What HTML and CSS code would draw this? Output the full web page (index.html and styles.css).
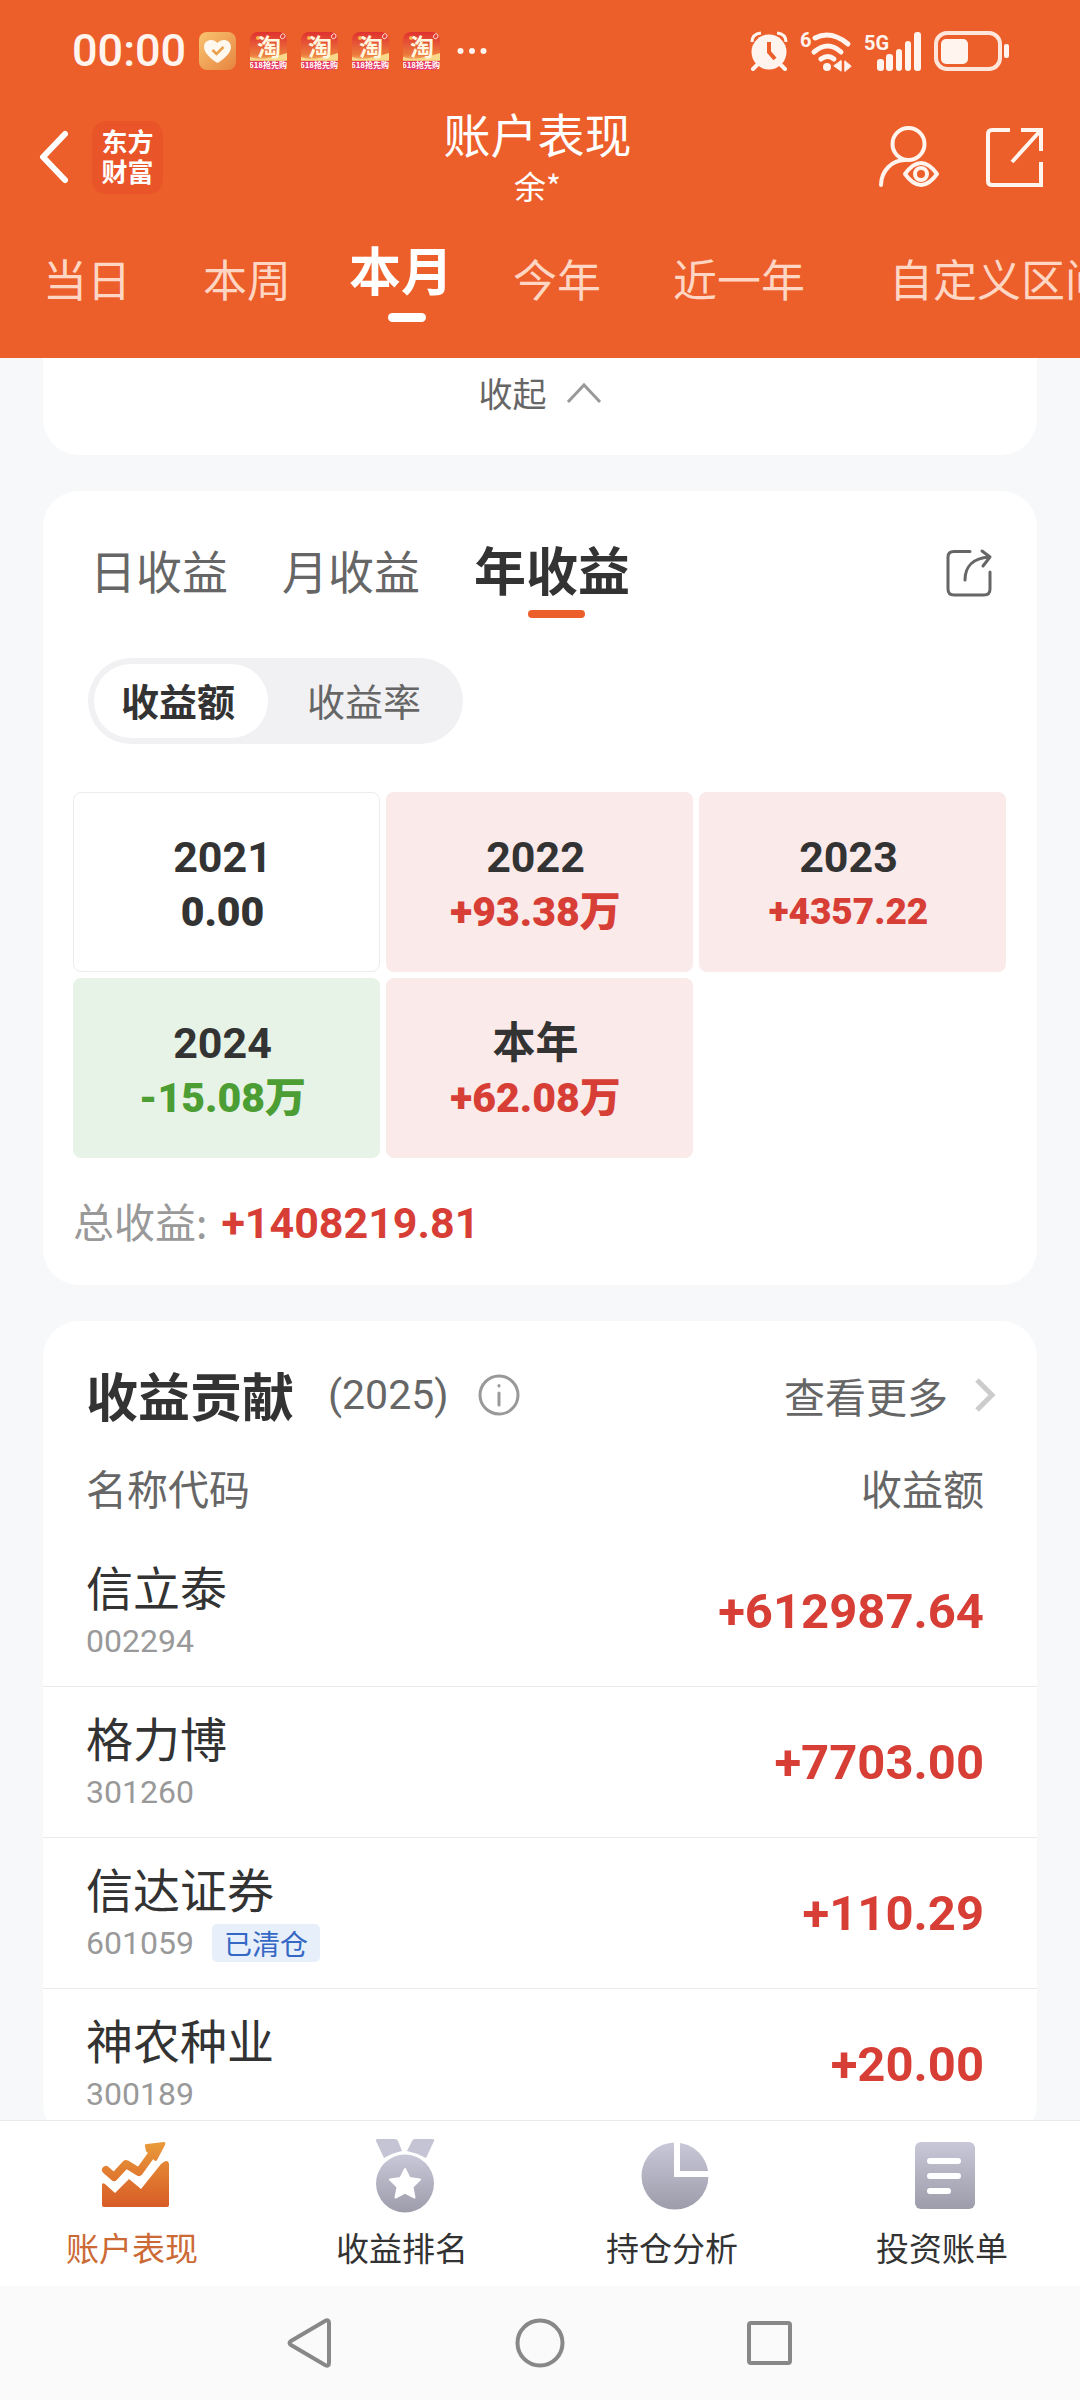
FILE: index.html
```html
<!DOCTYPE html>
<html lang="zh-CN">
<head>
<meta charset="utf-8">
<meta name="viewport" content="width=device-width, initial-scale=1">
<title>账户表现</title>
<link rel="stylesheet" href="styles.css">
</head>
<body>
<svg class="defs" width="0" height="0" aria-hidden="true">
  <defs>
    <linearGradient id="grey" x1="0" y1="0" x2="0" y2="1"><stop offset="0" stop-color="#c9c8d8"/><stop offset="1" stop-color="#9d9cab"/></linearGradient>
    <linearGradient id="fire" gradientUnits="userSpaceOnUse" x1="0" y1="3" x2="0" y2="68"><stop offset="0" stop-color="#e99a3a"/><stop offset="1" stop-color="#d85c27"/></linearGradient>
    <linearGradient id="gold" x1="0" y1="0" x2="1" y2="1"><stop offset="0" stop-color="#f8c470"/><stop offset="1" stop-color="#e78440"/></linearGradient>
    <linearGradient id="sale" x1="0" y1="0" x2="0" y2="1"><stop offset="0" stop-color="#df3130"/><stop offset=".6" stop-color="#ec7a3c"/><stop offset=".76" stop-color="#f7c172"/><stop offset=".77" stop-color="#e43a5c"/><stop offset="1" stop-color="#e8406c"/></linearGradient>
    <symbol id="tao" viewBox="0 0 37 38">
      <rect width="37" height="38" rx="8" fill="url(#sale)"/>
      <path d="M0 25q10 5 37-4v7H0z" fill="#fbd98a"/>
      <path d="M31 3q2-3 4 0q1 3-3 4q-3-2-1-4z" fill="none" stroke="#ffd9d0"/>
      <circle cx="8" cy="6" r="2" fill="#f9b348"/>
      <text x="19" y="24" text-anchor="middle" class="tao-mark">淘</text>
      <text x="18" y="36" text-anchor="middle" class="tao-sub">618抢先购</text>
    </symbol>
  </defs>
</svg>

<header class="header">
  <div class="status">
    <div class="status-side">
      <span class="clock">00:00</span>
      <div class="notices">
        <svg width="37" height="38" viewBox="0 0 37 38"><rect width="37" height="38" rx="8" fill="url(#gold)"/><path d="M18.500 31C12 27 5 21 5 15c0-7 9-9.500 13.500-4C23 5.500 32 8 32 15c0 6-7 12-13.500 16z" fill="#fff8ee"/><path d="M13.500 18l4 4 7-7" fill="none" stroke="#eaa04c" stroke-width="2.500"/></svg>
        <svg width="37" height="38"><use href="#tao"/></svg>
        <svg width="37" height="38"><use href="#tao"/></svg>
        <svg width="37" height="38"><use href="#tao"/></svg>
        <svg width="37" height="38"><use href="#tao"/></svg>
      </div>
      <svg width="30" height="8" viewBox="0 0 30 8" fill="#fff4ee"><circle cx="3.500" cy="4" r="3"/><circle cx="15" cy="4" r="3"/><circle cx="26.500" cy="4" r="3"/></svg>
    </div>
    <div class="status-side signals">
      <svg width="38" height="40" viewBox="0 0 38 40" fill="#fff4ee"><circle cx="19" cy="21" r="17.500"/><path d="M2 11q0-8 9-9M36 11q0-8-9-9" fill="none" stroke="#fff4ee" stroke-width="3"/><path d="M7 34l-4 4M31 34l4 4" stroke="#fff4ee" stroke-width="4" stroke-linecap="round"/><path d="M19 11v10l6 7" fill="none" stroke="#ec5e2a" stroke-width="4"/></svg>
      <svg width="52" height="42" viewBox="0 0 52 42" fill="none" stroke="#fff4ee" stroke-linecap="round"><text x="0" y="17" class="signal-text">6</text><path d="M15 8Q31 0 48 14M14 22q14-12 27 0M21 29q7-5 13 0" stroke-width="5"/><circle cx="27" cy="37" r="4" fill="#fff4ee" stroke="none"/><path d="M41 31v10l-7-5zM41 31v10M45 41V31l6 5zM45 41V31" fill="#fff4ee" stroke-width="1"/></svg>
      <svg width="58" height="42" viewBox="0 0 58 42" fill="#fff4ee"><text x="0" y="20" class="signal-text">5G</text><rect x="13" y="29" width="7" height="12" rx="3"/><rect x="22" y="24" width="7" height="17" rx="3"/><rect x="32" y="19" width="6" height="22" rx="3"/><rect x="41" y="11" width="6" height="30" rx="3"/><rect x="50" y="2" width="7" height="39" rx="3"/></svg>
      <svg width="76" height="40" viewBox="0 0 76 40"><rect x="2" y="2" width="64" height="36" rx="11" fill="none" stroke="#ffe6da" stroke-width="4"/><rect x="7" y="8" width="27" height="25" rx="5" fill="#fff4ee"/><rect x="70" y="13" width="5" height="14" rx="2" fill="#fff4ee"/></svg>
    </div>
  </div>

  <div class="appbar">
    <div class="appbar-left">
      <button class="icon-btn back" aria-label="返回"><svg width="30" height="54" viewBox="0 0 30 54"><path d="M26 4L4 27l22 23" fill="none" stroke="#fff" stroke-width="6" stroke-linecap="round" stroke-linejoin="round"/></svg></button>
      <a class="brand" href="#">东方<br>财富</a>
    </div>
    <div class="title">
      <h1>账户表现</h1>
      <p>余*</p>
    </div>
    <div class="appbar-right">
      <button class="icon-btn" aria-label="查看账户"><svg width="62" height="62" viewBox="0 0 62 62" fill="none" stroke="#fff4ee" stroke-width="4" stroke-linecap="round"><circle cx="30.500" cy="18" r="16"/><path d="M3 59c0-14 11-25 24-25"/><path d="M27 48Q43 26 59 48Q43 70 27 48z" stroke-linejoin="round"/><circle cx="43" cy="48" r="6"/></svg></button>
      <button class="icon-btn" aria-label="分享页面"><svg width="58" height="59" viewBox="0 0 58 59" fill="none" stroke="#fff4ee" stroke-width="4"><path d="M24 2H6Q2 2 2 6v47q0 4 4 4h49V34M35 2h20v21M55 2L26 34"/></svg></button>
    </div>
  </div>

  <nav class="periods" aria-label="时间区间">
    <button class="period">当日</button>
    <button class="period">本周</button>
    <button class="period is-active">本月</button>
    <button class="period">今年</button>
    <button class="period">近一年</button>
    <button class="period">自定义区间</button>
  </nav>
</header>

<main class="content">
  <section class="card card-collapse">
    <button class="collapse">收起<svg width="36" height="22" viewBox="0 0 36 22"><path d="M2 20L18 3l16 17" fill="none" stroke="#999" stroke-width="3"/></svg></button>
  </section>

  <section class="card card-income">
    <div class="income-head">
      <button class="kind">日收益</button>
      <button class="kind">月收益</button>
      <button class="kind is-active">年收益</button>
      <button class="icon-btn share" aria-label="分享收益"><svg width="46" height="48" viewBox="0 0 46 48" fill="none" stroke="#666" stroke-width="3" stroke-linecap="round"><path d="M24 2.500H8Q2 2.500 2 8v32q0 6 6 6h30q6 0 6-6V23"/><path d="M19 31C19 17 28 9 43 8M36 2l8 6-7 9" stroke-linejoin="round"/></svg></button>
    </div>
    <div class="switch">
      <button class="switch-item is-active">收益额</button>
      <button class="switch-item">收益率</button>
    </div>
    <div class="years">
      <div class="year flat"><span>2021</span><b>0.00</b></div>
      <div class="year up"><span>2022</span><b>+93.38万</b></div>
      <div class="year up compact"><span>2023</span><b>+4357.22</b></div>
      <div class="year down"><span>2024</span><b>-15.08万</b></div>
      <div class="year up"><span>本年</span><b>+62.08万</b></div>
    </div>
    <p class="total">总收益:<b>+1408219.81</b></p>
  </section>

  <section class="card card-contrib">
    <div class="contrib-head">
      <h2>收益贡献</h2>
      <span class="contrib-year">(2025)</span>
      <button class="icon-btn" aria-label="说明"><svg width="42" height="42" viewBox="0 0 42 42" fill="none" stroke="#999" stroke-width="3" stroke-linecap="round"><circle cx="21" cy="21" r="19"/><path d="M21 19v12M21 11.500v.5"/></svg></button>
      <a class="more" href="#">查看更多<svg width="22" height="36" viewBox="0 0 22 36"><path d="M3 3l15 15L3 33" fill="none" stroke="#ccc" stroke-width="5"/></svg></a>
    </div>
    <table class="stocks">
      <thead><tr><th scope="col">名称代码</th><th scope="col">收益额</th></tr></thead>
      <tbody>
        <tr><td><div class="name">信立泰</div><div class="code">002294</div></td><td>+612987.64</td></tr>
        <tr><td><div class="name">格力博</div><div class="code">301260</div></td><td>+7703.00</td></tr>
        <tr><td><div class="name">信达证券</div><div class="code">601059<span class="tag">已清仓</span></div></td><td>+110.29</td></tr>
        <tr><td><div class="name">神农种业</div><div class="code">300189</div></td><td>+20.00</td></tr>
      </tbody>
    </table>
  </section>
</main>

<nav class="tabbar" aria-label="主导航">
  <a class="tab is-active" href="#"><svg width="70" height="74" viewBox="0 0 70 74"><path d="M6 31L14 38 26 25 39 33 52 15" fill="none" stroke="url(#fire)" stroke-width="8" stroke-linecap="round" stroke-linejoin="round"/><path d="M45 7Q44 5 47 5L64 3Q66 3 65 6L57 21Q56 23 54 21L46 12z" fill="url(#fire)"/><path d="M2 46Q2 43 5 45L15 54 29 40 41 50 61 25Q68 19 69 25V66Q69 68 67 68H4Q2 68 2 66z" fill="url(#fire)"/></svg><span>账户表现</span></a>
  <a class="tab" href="#"><svg width="70" height="74" viewBox="0 0 70 74"><path d="M6 2Q5 0 8 0H25Q27 0 28 2L32 12Q22 14 14 19zM64 2Q65 0 62 0H45Q43 0 42 2L37 12Q47 14 56 19z" fill="#c5c4d4"/><circle cx="35" cy="44.500" r="29" fill="url(#grey)"/><path d="M35 30l4.500 9 10.500 1.500-7.500 7.500 2 10.500-9.500-5-9.500 5 2-10.500-7.500-7.500L30.500 39z" fill="#fff" stroke="#fff" stroke-width="2" stroke-linejoin="round"/></svg><span>收益排名</span></a>
  <a class="tab" href="#"><svg width="70" height="74" viewBox="0 0 70 74"><circle cx="35" cy="37" r="33.500" fill="url(#grey)"/><path d="M37 0V35H70" fill="none" stroke="#fff" stroke-width="6"/></svg><span>持仓分析</span></a>
  <a class="tab" href="#"><svg width="70" height="74" viewBox="0 0 70 74"><rect x="5" y="3" width="60" height="67" rx="6" fill="url(#grey)"/><path d="M20 22H48M20 37H48M20 52H38" stroke="#fff" stroke-width="6" stroke-linecap="round"/></svg><span>投资账单</span></a>
</nav>

<nav class="system" aria-label="系统导航">
  <button class="icon-btn" aria-label="系统返回"><svg width="50" height="54" viewBox="0 0 50 54"><path d="M6 25Q3 27 6 29L40 49Q44 51 44 47V7Q44 3 40 5z" fill="none" stroke="#888" stroke-width="4"/></svg></button>
  <button class="icon-btn" aria-label="主屏幕"><svg width="50" height="50" viewBox="0 0 50 50"><circle cx="25" cy="25" r="22.500" fill="none" stroke="#888" stroke-width="4"/></svg></button>
  <button class="icon-btn" aria-label="最近任务"><svg width="50" height="50" viewBox="0 0 50 50"><rect x="4" y="5" width="41" height="40" rx="2" fill="none" stroke="#888" stroke-width="4"/></svg></button>
</nav>
</body>
</html>
```
FILE: styles.css
```css
* { box-sizing: border-box; margin: 0; padding: 0; }

:root {
  --orange: #ec5e2a;
  --ink: #333;
  --mid: #666;
  --soft: #999;
  --red: #d73e35;
  --green: #4b9d34;
  --cjk: "Noto Sans CJK SC", sans-serif;
  --num: Roboto, "Noto Sans CJK SC", sans-serif;
}

body {
  height: 100vh;
  display: flex;
  flex-direction: column;
  overflow: hidden;
  background: #f7f8fa;
  color: var(--ink);
  font-family: var(--cjk);
}

button { border: 0; background: none; color: inherit; font: inherit; white-space: nowrap; cursor: pointer; }
a { color: inherit; text-decoration: none; }
svg { display: block; flex: none; overflow: visible; }
.defs { position: absolute; }
.icon-btn { display: flex; }

/* Header */
.header { flex: none; background: var(--orange); color: #fff; overflow: hidden; }
.status { display: flex; justify-content: space-between; align-items: center; height: 102px; padding: 0 70px 0 72px; }
.status-side { display: flex; align-items: center; gap: 13px; }
.signals { gap: 12px; }
.clock { font: 500 45px/60px var(--num); color: #fff4ee; }
.notices { display: flex; gap: 14px; margin-right: 4px; }
.tao-mark { font: 700 24px var(--cjk); fill: #fff6dd; }
.tao-sub { font: 700 8px var(--cjk); fill: #fff; }
.signal-text { font: 700 20px var(--num); fill: #fff4ee; stroke: none; }

.appbar { display: grid; grid-template-columns: 1fr auto 1fr; align-items: center; height: 110px; padding: 0 36px 0 31px; }
.appbar-left { display: flex; align-items: center; gap: 23px; }
.back { padding-left: 8px; }
.brand { width: 71px; height: 73px; padding: 5px 0; border-radius: 14px; background: #ea5429; text-align: center; font: 700 26px/30px var(--cjk); }
.title { padding-bottom: 4px; text-align: center; }
.title h1 { font-size: 47px; font-weight: 400; line-height: 60px; }
.title p { font-size: 32px; line-height: 44px; }
.appbar-right { display: flex; justify-content: flex-end; align-items: center; gap: 46px; }

.periods { display: flex; align-items: flex-start; gap: 72px; height: 146px; padding: 27px 0 0 43px; }
.period { flex: none; font-size: 44px; line-height: 78px; color: #ffd5c3; }
.period:last-child { margin-left: 12px; }
.period.is-active { margin: 0 -24px 0 -14px; padding-right: 12px; font-size: 52px; font-weight: 700; line-height: 60px; color: #fff; }
.period.is-active::after { content: ""; display: block; width: 38px; height: 9px; margin: 14px 0 0 39px; border-radius: 5px; background: #fff; }

/* Cards */
.content { flex: 1; min-height: 0; overflow: hidden; display: flex; flex-direction: column; gap: 36px; padding: 0 43px; }
.card { flex: none; background: #fff; border-radius: 36px; }
.card-collapse { border-radius: 0 0 36px 36px; padding-bottom: 27px; }
.collapse { display: flex; justify-content: center; align-items: center; gap: 19px; width: 100%; font-size: 34px; line-height: 70px; color: var(--mid); }

.card-income { padding: 40px 31px 32px 30px; }
.income-head { display: flex; align-items: flex-start; gap: 54px; height: 87px; padding: 0 14px 0 17px; }
.kind { font-size: 46px; line-height: 76px; color: var(--mid); }
.kind.is-active { font-size: 52px; font-weight: 700; color: var(--ink); }
.kind.is-active::after { content: ""; display: block; width: 57px; height: 8px; margin: 3px 0 0 54px; border-radius: 4px; background: var(--orange); }
.share { margin: 18px 0 0 auto; }

.switch { display: flex; width: fit-content; margin: 40px 0 48px 15px; padding: 6px; border-radius: 43px; background: #f1f1f4; }
.switch-item { padding: 0 36px 2px 39px; border-radius: 37px; font-size: 38px; line-height: 72px; color: var(--mid); }
.switch-item.is-active { padding: 0 33px 2px 27px; background: #fff; color: var(--ink); font-weight: 700; }

.years { display: grid; grid-template-columns: repeat(3, 1fr); grid-auto-rows: 180px; gap: 6px; }
.year { display: flex; flex-direction: column; justify-content: center; padding: 4px 8px 0 0; border-radius: 8px; text-align: center; font: 700 43px/56px var(--num); }
.year b { font-size: 41px; line-height: 54px; }
.year.compact b { font-size: 37px; }
.flat { border: 1px solid #ececec; }
.up { background: #faeaea; }
.up b { color: var(--red); }
.down { background: #e7f3e6; }
.down b { color: var(--green); }

.total { display: flex; gap: 14px; margin-top: 32px; font-size: 41px; line-height: 60px; color: var(--soft); }
.total b { padding-top: 3px; font: 700 43px/60px var(--num); color: var(--red); }

.card-contrib { padding-top: 38px; }
.contrib-head { display: flex; align-items: center; height: 72px; padding: 0 41px 0 43px; }
.contrib-head h2 { font-size: 52px; line-height: 70px; }
.contrib-year { margin: 0 29px 0 34px; font: 400 41px/60px var(--num); color: var(--mid); }
.more { display: flex; align-items: center; gap: 26px; margin-left: auto; font-size: 41px; line-height: 56px; color: var(--mid); }

.stocks { width: 100%; border-collapse: separate; border-spacing: 0; }
.stocks th { height: 105px; padding: 7px 0 0 43px; text-align: left; font-size: 41px; font-weight: 400; line-height: 60px; color: var(--mid); }
.stocks td { height: 151px; padding: 0 0 0 43px; border-bottom: 1px solid #ebebeb; vertical-align: middle; }
.stocks th:last-child, .stocks td:last-child { padding-left: 0; padding-right: 53px; text-align: right; }
.stocks td:last-child { padding-top: 2px; font: 700 49px/60px var(--num); color: var(--red); }
.name { font-size: 47px; line-height: 60px; }
.code { display: flex; align-items: center; gap: 18px; font: 400 32px/50px var(--num); color: var(--soft); }
.tag { padding: 0 12px; border-radius: 5px; background: #e6effa; color: #3568c4; font: 400 28px/38px var(--cjk); }

/* Bottom bars */
.tabbar { flex: none; display: grid; grid-template-columns: repeat(4, 1fr); border-top: 1px solid #ebebeb; background: #fff; }
.tab { display: flex; flex-direction: column; align-items: center; gap: 14px; padding: 18px 0 19px; font-size: 33px; line-height: 40px; }
.tab span { padding-right: 6px; }
.tab.is-active { color: #cc6a36; }
.system { flex: none; display: flex; justify-content: center; align-items: center; gap: 180px; height: 114px; background: #fafafa; }
```
